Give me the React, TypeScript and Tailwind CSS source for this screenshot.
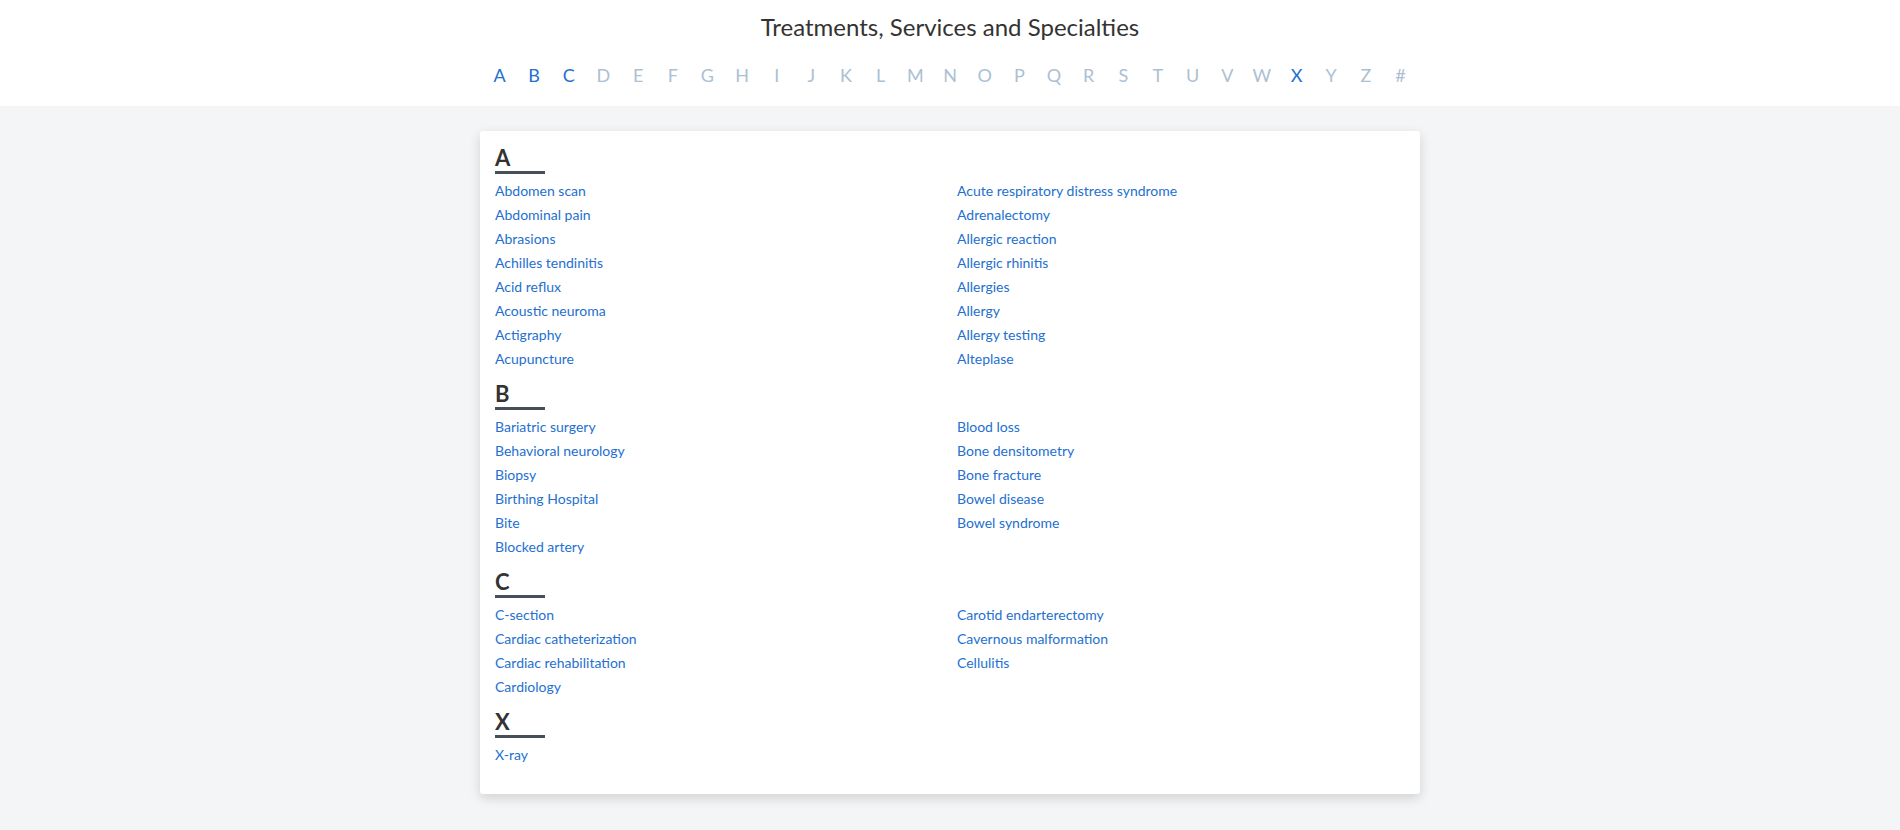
const letters = "ABCDEFGHIJKLMNOPQRSTUVWXYZ#".split("");
const active = ["A", "B", "C", "X"];

const sections: { letter: string; left: string[]; right: string[] }[] = [
  {
    letter: "A",
    left: [
      "Abdomen scan",
      "Abdominal pain",
      "Abrasions",
      "Achilles tendinitis",
      "Acid reflux",
      "Acoustic neuroma",
      "Actigraphy",
      "Acupuncture",
    ],
    right: [
      "Acute respiratory distress syndrome",
      "Adrenalectomy",
      "Allergic reaction",
      "Allergic rhinitis",
      "Allergies",
      "Allergy",
      "Allergy testing",
      "Alteplase",
    ],
  },
  {
    letter: "B",
    left: [
      "Bariatric surgery",
      "Behavioral neurology",
      "Biopsy",
      "Birthing Hospital",
      "Bite",
      "Blocked artery",
    ],
    right: [
      "Blood loss",
      "Bone densitometry",
      "Bone fracture",
      "Bowel disease",
      "Bowel syndrome",
    ],
  },
  {
    letter: "C",
    left: [
      "C-section",
      "Cardiac catheterization",
      "Cardiac rehabilitation",
      "Cardiology",
    ],
    right: [
      "Carotid endarterectomy",
      "Cavernous malformation",
      "Cellulitis",
    ],
  },
  { letter: "X", left: ["X-ray"], right: [] },
];

function LinkList({ items }: { items: string[] }) {
  return (
    <ul>
      {items.map((item) => (
        <li key={item} className="text-[14px] leading-[24px]">
          <a href="#" className="text-[#2470d0] hover:underline">
            {item}
          </a>
        </li>
      ))}
    </ul>
  );
}

export default function App() {
  return (
    <div className="min-h-[830px] bg-[#f4f5f7] font-['Lato',sans-serif] text-[#333]">
      <header className="bg-white pt-[12px] pb-[20px] text-center">
        <h1 className="text-[24px] leading-[29px] text-[#333]">
          Treatments, Services and Specialties
        </h1>
        <nav className="mt-[23px] flex justify-center">
          {letters.map((l) => (
            <a
              key={l}
              href="#"
              className={
                "w-[34.66px] text-center text-[18px] leading-[22px] " +
                (active.includes(l) ? "text-[#2470d0]" : "text-[#acc0d2]")
              }
            >
              {l}
            </a>
          ))}
        </nav>
      </header>
      <main className="pt-[25px] pb-[38px]">
        <div className="mx-auto w-[940px] rounded-[3px] bg-white px-[15px] pt-[14px] pb-[27px] shadow-[0_4px_12px_rgba(0,0,0,0.15)]">
          <div className="flex flex-col gap-[10px]">
            {sections.map((s) => (
              <section key={s.letter}>
                <h2 className="w-[50px] border-b-[3px] border-[#46505b] text-[22px] leading-[26px] font-bold text-[#333]">
                  {s.letter}
                </h2>
                <div className="mt-[5px] grid grid-cols-2 gap-x-[14px]">
                  <LinkList items={s.left} />
                  <LinkList items={s.right} />
                </div>
              </section>
            ))}
          </div>
        </div>
      </main>
    </div>
  );
}
